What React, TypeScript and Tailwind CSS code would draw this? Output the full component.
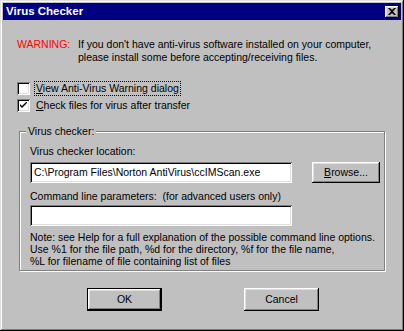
import React from "react";

const raised =
  "shadow-[inset_-1px_-1px_#000000,inset_1px_1px_#ffffff,inset_-2px_-2px_#808080,inset_2px_2px_#dfdfdf]";
const sunken =
  "shadow-[inset_1px_1px_#808080,inset_-1px_-1px_#ffffff,inset_2px_2px_#000000,inset_-2px_-2px_#dfdfdf]";

function CheckBox({ checked, label, focus }: { checked: boolean; label: React.ReactNode; focus?: boolean }) {
  return (
    <div className="flex items-center h-[17px]">
      <div className={`w-[13px] h-[13px] bg-white ${sunken} flex items-center justify-center`}>
        {checked && (
          <svg width="7" height="7" viewBox="0 0 7 7" className="block">
            <path d="M0 2 L0 4 L2 6 L7 1 L7 -1 L2 4 Z" fill="#000" />
          </svg>
        )}
      </div>
      <span
        className={`ml-[5px] px-[1px] leading-[13px] ${
          focus ? "outline outline-1 outline-dotted outline-black" : ""
        }`}
      >
        {label}
      </span>
    </div>
  );
}

function Button({ children, isDefault }: { children: React.ReactNode; isDefault?: boolean }) {
  return (
    <div
      className={`w-[75px] h-[23px] flex items-center justify-center bg-[#c0c0c0] ${
        isDefault
          ? "border border-black shadow-[inset_-1px_-1px_#000000,inset_1px_1px_#ffffff,inset_-2px_-2px_#808080,inset_2px_2px_#dfdfdf]"
          : raised
      }`}
    >
      {children}
    </div>
  );
}

export default function App() {
  return (
    <div
      className="w-[404px] h-[331px] bg-[#c0c0c0] p-[3px] flex flex-col text-[10.5px] whitespace-nowrap text-black shadow-[inset_-1px_-1px_#000000,inset_1px_1px_#dfdfdf,inset_-2px_-2px_#808080,inset_2px_2px_#ffffff]"
      style={{ fontFamily: '"Liberation Sans", Arial, sans-serif' }}
    >
      {/* title bar */}
      <div className="h-[17px] bg-[#000080] flex items-center justify-between pl-[3px] pr-[2px]">
        <span className="text-white font-bold text-[11.5px] leading-none">Virus Checker</span>
        <div className={`w-[14px] h-[12px] bg-[#c0c0c0] ${raised} flex items-center justify-center`}>
          <svg width="8" height="7" viewBox="0 0 8 7" className="block">
            <path d="M0 0 H2 L4 2 L6 0 H8 L5 3.5 L8 7 H6 L4 5 L2 7 H0 L3 3.5 Z" fill="#000" />
          </svg>
        </div>
      </div>

      {/* warning */}
      <div className="mt-[18px] ml-[14px] flex leading-[13px]">
        <span className="text-[#ff0000] w-[61px]">WARNING:</span>
        <div className="flex flex-col">
          <span>If you don't have anti-virus software installed on your computer,</span>
          <span>please install some before accepting/receiving files.</span>
        </div>
      </div>

      {/* checkboxes */}
      <div className="mt-[16px] ml-[14px] flex flex-col">
        <CheckBox
          checked={false}
          focus
          label={
            <>
              <u>V</u>iew Anti-Virus Warning dialog
            </>
          }
        />
        <CheckBox
          checked
          label={
            <>
              <u>C</u>heck files for virus after transfer
            </>
          }
        />
      </div>

      {/* group box */}
      <div className="relative mt-[17px] mx-[16px] h-[140px] border border-[#808080] shadow-[1px_1px_#ffffff,inset_1px_1px_#ffffff]">
        <span className="absolute -top-[7px] left-[6px] bg-[#c0c0c0] px-[2px] leading-[13px]">
          Virus checker:
        </span>
        <div className="flex flex-col pl-[10px] pt-[13px]">
          <span className="leading-[13px]">Virus checker location:</span>
          <div className="flex items-center mt-[4px]">
            <div className={`w-[262px] h-[21px] bg-white ${sunken} flex items-center px-[4px]`}>
              <span className="leading-[13px]">C:\Program Files\Norton AntiVirus\ccIMScan.exe</span>
            </div>
            <div
              className={`ml-[20px] w-[68px] h-[21px] flex items-center justify-center bg-[#c0c0c0] ${raised}`}
            >
              <span>
                <u>B</u>rowse...
              </span>
            </div>
          </div>
          <span className="leading-[13px] mt-[7px]">Command line parameters:&nbsp; (for advanced users only)</span>
          <div className={`w-[262px] h-[21px] bg-white ${sunken} mt-[2px]`} />
          <div className="flex flex-col leading-[12px] mt-[5px]">
            <span>Note: see Help for a full explanation of the possible command line options.</span>
            <span>Use %1 for the file path, %d for the directory, %f for the file name,</span>
            <span>%L for filename of file containing list of files</span>
          </div>
        </div>
      </div>

      {/* buttons */}
      <div className="mt-[17px] flex justify-center gap-[82px] pl-[2px]">
        <Button isDefault>OK</Button>
        <Button>Cancel</Button>
      </div>
    </div>
  );
}
